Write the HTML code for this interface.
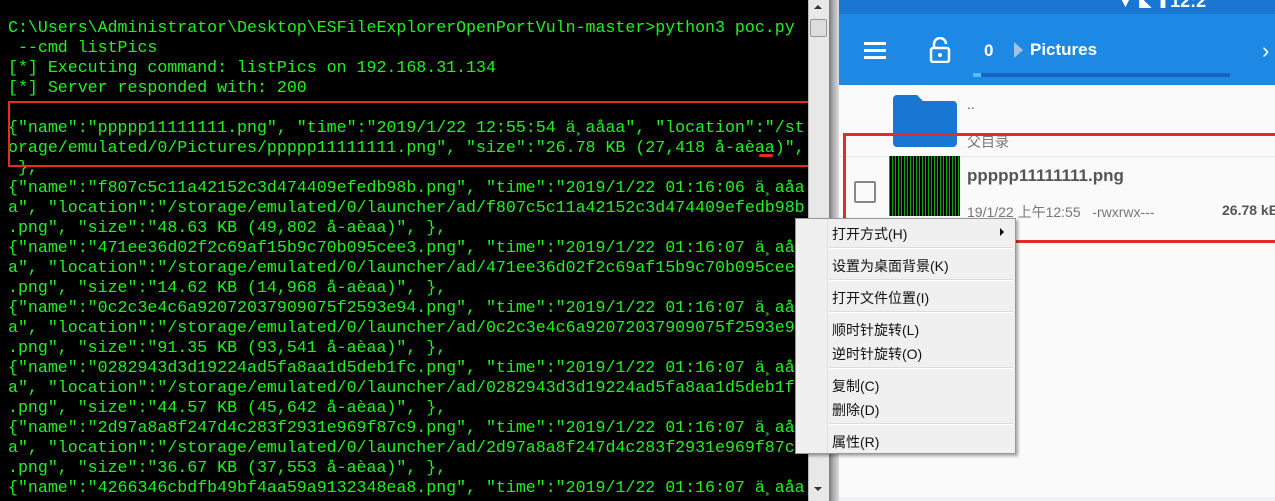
<!DOCTYPE html>
<html><head><meta charset="utf-8"><style>
*{margin:0;padding:0;box-sizing:border-box}
body{width:1275px;height:501px;overflow:hidden;background:#fff;position:relative;font-family:"Liberation Sans","Noto Sans CJK SC",sans-serif}
#term{position:absolute;left:0;top:0;width:808px;height:501px;background:#000;overflow:hidden}
#term pre{position:absolute;left:8px;top:18px;font-family:"Liberation Mono",monospace;font-size:16.6px;line-height:20px;color:#1cf51c;white-space:pre}
#sb{position:absolute;left:808px;top:0;width:21px;height:501px;background:#e8e8e8;border-left:1px solid #bbb}
#gap{position:absolute;left:829px;top:0;width:10px;height:501px;background:linear-gradient(90deg,#777,#aaa 40%,#ddd)}
#and{position:absolute;left:839px;top:0;width:436px;height:501px;background:#fafafa}
.box{position:absolute;border:3px solid #e52a2a}
#menu{position:absolute;left:795px;top:218px;width:221px;height:236px;background:#f0f0f0;border:1px solid #979797;box-shadow:2px 2px 3px rgba(0,0,0,.35);font-size:14px;color:#111}
#menu .it{position:absolute;left:36px}
#menu .sep{position:absolute;left:33px;width:184px;height:2px;border-top:1px solid #dcdcdc;border-bottom:1px solid #fff}
</style></head><body>
<div id="term"><pre>C:\Users\Administrator\Desktop\ESFileExplorerOpenPortVuln-master>python3 poc.py
 --cmd listPics
[*] Executing command: listPics on 192.168.31.134
[*] Server responded with: 200

{"name":"ppppp11111111.png", "time":"2019/1/22 12:55:54 ä¸aåaa", "location":"/st
orage/emulated/0/Pictures/ppppp11111111.png", "size":"26.78 KB (27,418 å-aèaa)",
 },
{"name":"f807c5c11a42152c3d474409efedb98b.png", "time":"2019/1/22 01:16:06 ä¸aåa
a", "location":"/storage/emulated/0/launcher/ad/f807c5c11a42152c3d474409efedb98b
.png", "size":"48.63 KB (49,802 å-aèaa)", },
{"name":"471ee36d02f2c69af15b9c70b095cee3.png", "time":"2019/1/22 01:16:07 ä¸aåa
a", "location":"/storage/emulated/0/launcher/ad/471ee36d02f2c69af15b9c70b095cee3
.png", "size":"14.62 KB (14,968 å-aèaa)", },
{"name":"0c2c3e4c6a92072037909075f2593e94.png", "time":"2019/1/22 01:16:07 ä¸aåa
a", "location":"/storage/emulated/0/launcher/ad/0c2c3e4c6a92072037909075f2593e94
.png", "size":"91.35 KB (93,541 å-aèaa)", },
{"name":"0282943d3d19224ad5fa8aa1d5deb1fc.png", "time":"2019/1/22 01:16:07 ä¸aåa
a", "location":"/storage/emulated/0/launcher/ad/0282943d3d19224ad5fa8aa1d5deb1fc
.png", "size":"44.57 KB (45,642 å-aèaa)", },
{"name":"2d97a8a8f247d4c283f2931e969f87c9.png", "time":"2019/1/22 01:16:07 ä¸aåa
a", "location":"/storage/emulated/0/launcher/ad/2d97a8a8f247d4c283f2931e969f87c9
.png", "size":"36.67 KB (37,553 å-aèaa)", },
{"name":"4266346cbdfb49bf4aa59a9132348ea8.png", "time":"2019/1/22 01:16:07 ä¸aåa</pre>
<div class="box" style="left:8px;top:101px;width:812px;height:66px;border-width:2px"></div>
<div style="position:absolute;left:759px;top:154px;width:14px;height:3px;background:#e52a2a;border-radius:2px"></div>
</div>
<div id="sb">
<div style="position:absolute;left:5px;top:5px;width:0;height:0;border-left:4px solid transparent;border-right:4px solid transparent;border-bottom:4px solid #333"></div>
<div style="position:absolute;left:1px;top:19px;width:17px;height:18px;background:#ddd;border:1px solid #999;border-radius:2px"></div>
<div style="position:absolute;left:5px;top:487px;width:0;height:0;border-left:4px solid transparent;border-right:4px solid transparent;border-top:4px solid #333"></div>
</div>
<div id="gap"></div>
<div id="and">
<div style="position:absolute;left:0;top:0;width:436px;height:14px;background:#1976d2;overflow:hidden"></div>
<div style="position:absolute;left:280px;top:-6px;color:#fff;font-size:13px;line-height:14px;height:14px;overflow:hidden;white-space:nowrap">▼ &nbsp;◣ &nbsp;▮ <b style="font-size:18px">12:2</b></div>
<div style="position:absolute;left:0;top:14px;width:436px;height:71px;background:#1e88e5"></div>
<div style="position:absolute;left:25px;top:42px;width:22px;height:3px;background:#fff;box-shadow:0 7px 0 #fff,0 14px 0 #fff"></div>
<svg style="position:absolute;left:90px;top:37px" width="22" height="26" viewBox="0 0 22 26"><path d="M5 11V7a6 6 0 0 1 12 0" fill="none" stroke="#fff" stroke-width="2.5"/><rect x="2" y="11" width="18" height="14" rx="2" fill="none" stroke="#fff" stroke-width="2.5"/><circle cx="11" cy="18" r="2" fill="#fff"/></svg>
<div style="position:absolute;left:145px;top:41px;color:#fff;font-weight:bold;font-size:17px">0</div>
<div style="position:absolute;left:175px;top:42px;width:0;height:0;border-top:8px solid transparent;border-bottom:8px solid transparent;border-left:9px solid #9cc4ea"></div>
<div style="position:absolute;left:191px;top:40px;color:#fff;font-weight:bold;font-size:17px">Pictures</div>
<div style="position:absolute;left:423px;top:38px;color:#fff;font-size:22px">›</div>
<div style="position:absolute;left:134px;top:73px;width:257px;height:4px;background:#1565c0"></div>
<div style="position:absolute;left:134px;top:73px;width:8px;height:4px;background:#4fc3f7"></div>
<svg style="position:absolute;left:54px;top:95px" width="64" height="52" viewBox="0 0 64 52"><path d="M4 0h20l6 6h30a4 4 0 0 1 4 4v38a4 4 0 0 1-4 4H4a4 4 0 0 1-4-4V4a4 4 0 0 1 4-4z" fill="#1976d2"/></svg>
<div style="position:absolute;left:128px;top:96px;color:#555;font-size:14px">..</div>
<div style="position:absolute;left:128px;top:132px;color:#777;font-size:14px">父目录</div>
<div style="position:absolute;left:0;top:156px;width:436px;height:1px;background:#e6e6e6"></div>
<div style="position:absolute;left:15px;top:181px;width:22px;height:22px;border:2px solid #888;border-radius:2px"></div>
<div style="position:absolute;left:50px;top:156px;width:71px;height:60px;background:#000;background-image:repeating-linear-gradient(90deg,#0a0 0 1px,transparent 1px 3px),repeating-linear-gradient(0deg,transparent 0 2px,#000 2px 4px)"></div>
<div style="position:absolute;left:128px;top:166px;color:#555;font-weight:bold;font-size:17px">ppppp11111111.png</div>
<div style="position:absolute;left:128px;top:202px;color:#777;font-size:14px;white-space:nowrap">19/1/22 上午12:55 &nbsp;&nbsp;-rwxrwx---</div>
<div style="position:absolute;left:383px;top:202px;color:#555;font-weight:bold;font-size:14px;white-space:nowrap">26.78 kB</div>
<div class="box" style="left:4px;top:133px;width:440px;height:110px"></div>
<div style="position:absolute;left:0;top:497px;width:436px;height:4px;background:#eef2f5"></div>
</div>
<div id="menu">
<div style="position:absolute;left:31px;top:0;width:1px;height:234px;background:#e2e2e2"></div>
<div class="it" style="top:5px">打开方式(H)</div>
<div style="position:absolute;left:204px;top:9px;width:0;height:0;border-top:4px solid transparent;border-bottom:4px solid transparent;border-left:4px solid #000"></div>
<div class="sep" style="top:28px"></div>
<div class="it" style="top:37px">设置为桌面背景(K)</div>
<div class="sep" style="top:60px"></div>
<div class="it" style="top:69px">打开文件位置(I)</div>
<div class="sep" style="top:92px"></div>
<div class="it" style="top:101px">顺时针旋转(L)</div>
<div class="it" style="top:125px">逆时针旋转(O)</div>
<div class="sep" style="top:148px"></div>
<div class="it" style="top:157px">复制(C)</div>
<div class="it" style="top:181px">删除(D)</div>
<div class="sep" style="top:204px"></div>
<div class="it" style="top:213px">属性(R)</div>
</div>
</body></html>
